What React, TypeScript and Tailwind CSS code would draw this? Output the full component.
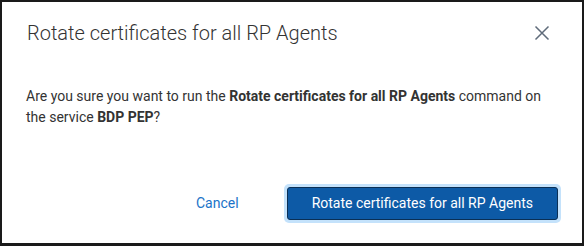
import React from "react";

export default function App() {
  return (
    <div className="w-[584px] h-[246px] bg-white border-2 border-b-[3px] border-[#1a1a1a] flex flex-col" style={{ fontFamily: "Roboto, 'Liberation Sans', sans-serif" }}>
      <div className="flex items-center justify-between pl-[25px] pr-[30px] pt-[6px] h-[56px]">
        <h1 className="text-[20px] font-light text-[#333] leading-[26px]">Rotate certificates for all RP Agents</h1>
        <button className="w-[20px] h-[20px] flex items-center justify-center text-[#5f6b7a]">
          <svg width="16" height="16" viewBox="0 0 16 16" fill="none" stroke="currentColor" strokeWidth="1.5">
            <path d="M1.5 1.5 L14.5 14.5 M14.5 1.5 L1.5 14.5" />
          </svg>
        </button>
      </div>
      <div className="pl-[24px] pr-[20px] pt-[28px] text-[14px] leading-[21px] text-[#333]">
        Are you sure you want to run the <span className="font-bold">Rotate certificates for all RP Agents</span> command on<br />the service <span className="font-bold">BDP PEP</span>?
      </div>
      <div className="mt-auto mb-[20px] flex items-center justify-end pr-[21px] gap-[45px]">
        <button className="text-[14px] text-[#1a73c8]">Cancel</button>
        <div className="rounded-[5px] bg-[#c4e2fb] p-[3px]">
          <button className="h-[33px] px-[24px] rounded-[3px] bg-[#0d5aa6] border border-[#0a2f55] text-white text-[14px]">Rotate certificates for all RP Agents</button>
        </div>
      </div>
    </div>
  );
}
